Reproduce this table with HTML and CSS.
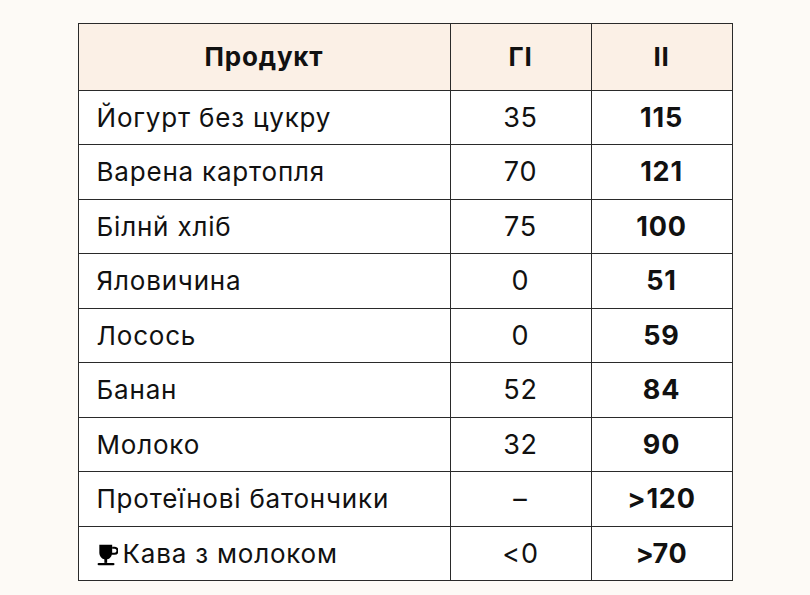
FILE: index.html
```html
<!DOCTYPE html>
<html lang="uk">
<head>
<meta charset="utf-8">
<title>ГІ та ІІ</title>
<link rel="stylesheet" href="styles.css">
</head>
<body>
<div class="page">
  <table class="gi-table">
    <colgroup>
      <col class="col-name">
      <col class="col-num">
      <col class="col-num">
    </colgroup>
    <thead>
      <tr>
        <th>Продукт</th>
        <th>ГІ</th>
        <th>ІІ</th>
      </tr>
    </thead>
    <tbody>
      <tr><td class="name">Йогурт без цукру</td><td class="num">35</td><td class="num ii">115</td></tr>
      <tr><td class="name">Варена картопля</td><td class="num">70</td><td class="num ii">121</td></tr>
      <tr><td class="name">Білнй хліб</td><td class="num">75</td><td class="num ii">100</td></tr>
      <tr><td class="name">Яловичина</td><td class="num">0</td><td class="num ii">51</td></tr>
      <tr><td class="name">Лосось</td><td class="num">0</td><td class="num ii">59</td></tr>
      <tr><td class="name">Банан</td><td class="num">52</td><td class="num ii">84</td></tr>
      <tr><td class="name">Молоко</td><td class="num">32</td><td class="num ii">90</td></tr>
      <tr><td class="name">Протеїнові батончики</td><td class="num">–</td><td class="num ii">&gt;120</td></tr>
      <tr><td class="name"><svg class="cup" viewBox="0 2.5 18 18.5" aria-hidden="true"><path d="M2 3h11v6.5c0 3.6-2.5 6-5.5 6S2 13.1 2 9.5z" fill="#000"/><path d="M13 5.5h2a2.6 2.6 0 0 1 0 5.2H12.6" fill="none" stroke="#000" stroke-width="1.8"/><rect x="6.3" y="14.5" width="2.4" height="4" fill="#000"/><rect x="0.5" y="18.5" width="14.5" height="2" rx="1" fill="#000"/></svg>Кава з молоком</td><td class="num">&lt;0</td><td class="num ii">&gt;70</td></tr>
    </tbody>
  </table>
</div>
</body>
</html>
```
FILE: styles.css
```css
html, body {
  margin: 0;
  padding: 0;
  background: #fdfaf6;
}
body {
  font-family: Inter, "Noto Sans", "Liberation Sans", sans-serif;
  color: #111;
}
.page {
  width: 810px;
  height: 595px;
  display: flex;
  justify-content: center;
  padding-top: 23px;
  box-sizing: border-box;
}
.gi-table {
  width: 654px;
  border-collapse: collapse;
  table-layout: fixed;
  background: #fff;
  border: 1.5px solid #2a2a2a;
  align-self: flex-start;
}
.col-name { width: 372px; }
.col-num { width: 141px; }
.gi-table th,
.gi-table td {
  border: 1.5px solid #2a2a2a;
  padding: 0;
  letter-spacing: 0.8px;
}
.gi-table th {
  background: #fbf0e6;
  height: 65.5px;
  font-size: 26px;
  font-weight: 700;
  text-align: center;
  color: #111;
}
.gi-table td {
  height: 53.5px;
  font-size: 26px;
  font-weight: 400;
  color: #111;
}
.gi-table td.name {
  padding-left: 18px;
  text-align: left;
}
.gi-table td.num {
  text-align: center;
  font-size: 27px;
}
.gi-table td.ii {
  font-weight: 700;
}
.cup {
  width: 21px;
  height: 22px;
  vertical-align: -3px;
  margin-right: 5px;
}
```
